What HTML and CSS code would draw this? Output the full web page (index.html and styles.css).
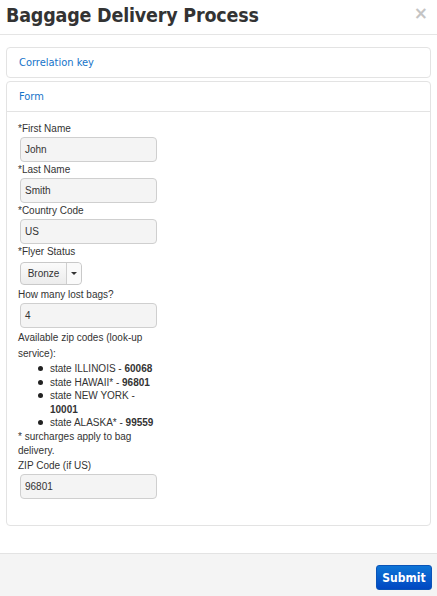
FILE: index.html
```html
<!DOCTYPE html>
<html>
<head>
<meta charset="utf-8">
<link rel="stylesheet" href="styles.css">
</head>
<body>
<div class="modal">
  <div class="modal-header">
    <h1 class="title">Baggage Delivery Process</h1>
    <span class="close">×</span>
  </div>
  <div class="modal-body">
    <div class="panel">
      <div class="panel-heading">Correlation key</div>
    </div>
    <div class="panel">
      <div class="panel-heading with-border">Form</div>
      <div class="panel-body">
        <div class="form-col">
          <label class="lbl">*First Name</label>
          <div class="input">John</div>
          <label class="lbl">*Last Name</label>
          <div class="input">Smith</div>
          <label class="lbl">*Country Code</label>
          <div class="input">US</div>
          <label class="lbl">*Flyer Status</label>
          <div class="select"><span class="select-val">Bronze</span><span class="select-caret"></span></div>
          <label class="lbl">How many lost bags?</label>
          <div class="input">4</div>
          <p class="info">Available zip codes (look-up service):</p>
          <ul class="zips">
            <li>state ILLINOIS - <b>60068</b></li>
            <li>state HAWAII* - <b>96801</b></li>
            <li>state NEW YORK - <b>10001</b></li>
            <li>state ALASKA* - <b>99559</b></li>
          </ul>
          <p class="note">* surcharges apply to bag delivery.</p>
          <label class="lbl">ZIP Code (if US)</label>
          <div class="input">96801</div>
        </div>
      </div>
    </div>
  </div>
  <div class="modal-footer">
    <button class="btn">Submit</button>
  </div>
</div>
</body>
</html>
```
FILE: styles.css
```css
html, body {
  margin: 0;
  padding: 0;
  background: #fff;
}
.modal {
  width: 437px;
  height: 596px;
  display: flex;
  flex-direction: column;
  font-family: "Liberation Sans", Arial, sans-serif;
  color: #333;
}
.modal-header {
  flex-shrink: 0;
  height: 34px;
  border-bottom: 1px solid #e5e5e5;
  display: flex;
  align-items: flex-start;
  justify-content: space-between;
  padding: 0 6px 0 6px;
}
.title {
  margin: 0;
  padding-top: 3px;
  font-family: "DejaVu Sans Condensed", "DejaVu Sans", sans-serif;
  font-weight: bold;
  font-size: 19.5px;
  line-height: 26px;
  color: #333;
  letter-spacing: -0.2px;
}
.close {
  font-family: "DejaVu Sans", sans-serif;
  font-weight: bold;
  font-size: 17px;
  line-height: 17px;
  color: #c4c4c4;
  padding-top: 5px;
  padding-right: 3px;
}
.modal-body {
  flex: 1;
  min-height: 0;
  padding: 12px 6px 0 6px;
  display: flex;
  flex-direction: column;
  gap: 3px;
}
.panel {
  border: 1px solid #e3e3e3;
  border-radius: 4px;
}
.panel-heading {
  height: 29px;
  padding-left: 12px;
  display: flex;
  align-items: center;
  font-family: "DejaVu Sans Condensed", "DejaVu Sans", sans-serif;
  font-size: 11px;
  color: #1573c9;
}
.panel-heading.with-border {
  border-bottom: 1px solid #e3e3e3;
}
.panel-body {
  padding: 9px 11px 26px 11px;
}
.form-col {
  width: 141px;
  display: flex;
  flex-direction: column;
  align-items: flex-start;
  font-size: 10px;
}
.lbl {
  display: block;
  line-height: 16px;
  height: 16px;
  color: #333;
}
.input {
  box-sizing: border-box;
  width: 137px;
  height: 25px;
  margin-left: 2px;
  padding: 0 4px;
  border: 1px solid #cfcfcf;
  border-radius: 4px;
  background: #f4f4f4;
  display: flex;
  align-items: center;
  font-size: 10px;
  color: #333;
}
.select {
  box-sizing: border-box;
  height: 23px;
  width: 62px;
  margin: 2px 0 2px 2px;
  border: 1px solid #c9c9c9;
  border-radius: 4px;
  background: linear-gradient(#fbfbfb, #ececec);
  display: flex;
  align-items: stretch;
}
.select-val {
  flex: 1;
  display: flex;
  align-items: center;
  justify-content: center;
  border-right: 1px solid #cfcfcf;
  font-size: 10px;
  color: #333;
}
.select-caret {
  width: 14px;
  position: relative;
  background: #fafafa;
  border-radius: 0 4px 4px 0;
}
.select-caret::after {
  content: "";
  position: absolute;
  left: 4px;
  top: 9px;
  border-left: 3px solid transparent;
  border-right: 3px solid transparent;
  border-top: 3px solid #333;
}
.info {
  margin: 2px 0 0 0;
  line-height: 16px;
}
.zips {
  margin: 0;
  padding-left: 32px;
  line-height: 13.5px;
  list-style: none;
}
.zips li::before {
  content: "";
  display: inline-block;
  width: 5px;
  height: 5px;
  border-radius: 50%;
  background: #222;
  margin-left: -12px;
  margin-right: 7px;
  vertical-align: 1px;
}
.zips b {
  font-weight: bold;
}
.note {
  margin: 0;
  line-height: 14px;
  width: 130px;
}
.modal-footer {
  flex-shrink: 0;
  border-top: 1px solid #e3e3e3;
  background: #f4f4f4;
  height: 43px;
  display: flex;
  justify-content: flex-end;
  align-items: flex-start;
  padding: 11px 5px 0 0;
  box-sizing: border-box;
}
.btn {
  width: 56px;
  height: 25px;
  border: 1px solid #0a54b8;
  border-radius: 3px;
  background: linear-gradient(#0e75d6, #0047c2);
  color: #fff;
  font-family: "DejaVu Sans Condensed", "DejaVu Sans", sans-serif;
  font-size: 12px;
  font-weight: bold;
  padding: 0;
}
```
